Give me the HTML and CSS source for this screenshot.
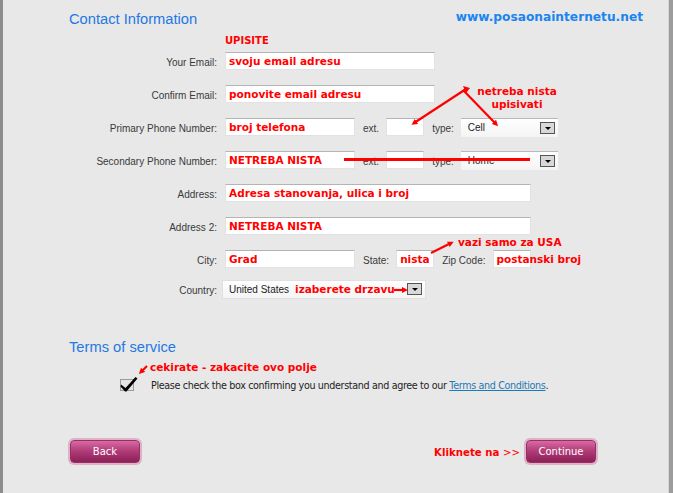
FILE: index.html
```html
<!DOCTYPE html>
<html lang="en">
<head>
    <meta charset="UTF-8">
    <title>Contact Information</title>
    <link rel="stylesheet" href="styles.css">
</head>
<body>
    <div class="page">
        <div class="header">
            <h2>Contact Information</h2>
            <span class="site">www.posaonainternetu.net</span>
        </div>

        <div class="form">
            <div class="row hint"><span></span><span class="red">UPISITE</span></div>

            <div class="row">
                <label>Your Email:</label>
                <div class="cell"><div class="field w210 red">svoju email adresu</div></div>
            </div>
            <div class="row">
                <label>Confirm Email:</label>
                <div class="cell"><div class="field w210 red">ponovite email adresu</div></div>
            </div>
            <div class="row">
                <label>Primary Phone Number:</label>
                <div class="cell">
                    <div class="field w130 red">broj telefona</div>
                    <span class="sub">ext.</span>
                    <div class="field w38"></div>
                    <span class="sub">type:</span>
                    <div class="select w97"><span>Cell</span><i class="drop"></i></div>
                </div>
            </div>
            <div class="row">
                <label>Secondary Phone Number:</label>
                <div class="cell">
                    <div class="field w130 red">NETREBA NISTA</div>
                    <span class="sub">ext.</span>
                    <div class="field w38"></div>
                    <span class="sub">type:</span>
                    <div class="select w97"><span>Home</span><i class="drop"></i></div>
                    <div class="strike"></div>
                </div>
            </div>
            <div class="row">
                <label>Address:</label>
                <div class="cell"><div class="field w306 red">Adresa stanovanja, ulica i broj</div></div>
            </div>
            <div class="row">
                <label>Address 2:</label>
                <div class="cell"><div class="field w306 red">NETREBA NISTA</div></div>
            </div>
            <div class="row">
                <label>City:</label>
                <div class="cell">
                    <div class="field w130 red">Grad</div>
                    <span class="sub">State:</span>
                    <div class="field w38 red">nista</div>
                    <span class="sub">Zip Code:</span>
                    <div class="field w38 red">postanski broj</div>
                </div>
            </div>
            <div class="row country">
                <label>Country:</label>
                <div class="cell">
                    <div class="select w204">
                        <span>United States</span>
                        <span class="red pick">izaberete drzavu</span>
                        <i class="drop"></i>
                    </div>
                </div>
            </div>
        </div>

        <h2 class="terms-title">Terms of service</h2>
        <div class="terms">
            <div class="red check-note">cekirate - zakacite ovo polje</div>
            <div class="agree">
                <svg class="box" width="20" height="16" viewBox="0 0 20 16">
                    <rect x="0.5" y="3.5" width="13" height="11" fill="#e4e4e4" stroke="#9a9a9a"/>
                    <path d="M1 8.5 L5.5 12 L15.5 1 L17.5 2.5 L6.5 15.5 L5 15.5 L0.5 10.5 Z" fill="#000"/>
                </svg>
                <p>Please check the box confirming you understand and agree to our <a href="#">Terms and Conditions</a>.</p>
            </div>
        </div>

        <div class="actions">
            <button class="btn">Back</button>
            <div class="next">
                <span class="red">Kliknete na <span class="thin">&gt;&gt;</span></span>
                <button class="btn">Continue</button>
            </div>
        </div>

        <!-- notes drawn over the form -->
        <div class="note note-phone red">netreba nista<br>upisivati</div>
        <div class="note note-usa red">vazi samo za USA</div>
        <svg class="arrows" width="673" height="493" viewBox="0 0 673 493">
            <defs>
                <marker id="head" markerWidth="6" markerHeight="6" refX="3" refY="3" orient="auto" markerUnits="userSpaceOnUse" viewBox="0 0 6 6">
                    <path d="M0 0 L6 3 L0 6 Z" fill="#f00"/>
                </marker>
            </defs>
            <g stroke="#f00" stroke-width="2.2" fill="none">
                <path d="M466 89 L414 123" marker-end="url(#head)"/>
                <path d="M463 90 L496 124" marker-end="url(#head)"/>
                <path d="M431 253 L451 243" marker-end="url(#head)"/>
                <path d="M394 290 L405 290" marker-end="url(#head)"/>
                <path d="M147 366 L141 372" marker-end="url(#head)"/>
            </g>
            <path d="M463 86 L470 88 L466 93 Z" fill="#f00"/>
        </svg>
    </div>
</body>
</html>
```

FILE: styles.css
```css
body {
    margin: 0;
    background: #e8e8e8;
    font-family: "Liberation Sans", Arial, sans-serif;
    font-size: 10px;
    color: #3a3a3a;
}

.page {
    position: relative;
    box-sizing: border-box;
    width: 673px;
    height: 493px;
    border-left: 3px solid #8c8c8c;
    border-right: 4px solid #9c9c9c;
    box-shadow: inset -1px 0 #d6d6d6;
    padding: 10px 0 0 66px;
    overflow: hidden;
}

.red {
    color: #f00;
    font-family: "DejaVu Sans", Verdana, sans-serif;
    font-weight: bold;
    font-size: 10.5px;
}

.header {
    display: flex;
    justify-content: space-between;
    padding-right: 26px;
}

h2 {
    margin: 0;
    font-size: 14.7px;
    line-height: 18px;
    font-weight: normal;
    color: #1e78e6;
}

.site {
    font-family: "DejaVu Sans", Verdana, sans-serif;
    font-weight: bold;
    font-size: 12.2px;
    color: #1a84f0;
}

.form {
    margin-top: 6px;
}

.row {
    display: grid;
    grid-template-columns: 148px auto;
    column-gap: 8px;
    height: 18px;
    margin-bottom: 15px;
    align-items: center;
}

.row.hint {
    height: 13px;
    margin-bottom: 5px;
}

.row.hint .red {
    font-size: 10px;
}

.row.country {
    margin-top: -3px;
}

label {
    text-align: right;
    padding-top: 3px;
}

.cell {
    position: relative;
    display: flex;
    align-items: center;
    height: 18px;
}

.field {
    box-sizing: border-box;
    height: 18px;
    line-height: 16px;
    background: #fff;
    border: 1px solid #e2e2e2;
    border-top-color: #b4b4b4;
    padding-left: 3px;
    white-space: nowrap;
}

.w210 { width: 210px; }
.w130 { width: 130px; }
.w38 { width: 38px; }
.w306 { width: 306px; }
.w97 { width: 97px; }
.w204 { width: 204px; }

.sub {
    margin: 3px 7px 0 8px;
}

.select {
    box-sizing: border-box;
    display: flex;
    align-items: center;
    height: 19px;
    background: linear-gradient(#fff, #f4f4f4);
    border-top: 1px solid #b8b8b8;
    padding: 0 3px 0 7px;
    color: #222;
}

.row .select.w204 {
    margin-left: -3px;
    padding-left: 6px;
    border: 1px solid #e0e0e0;
}

.select .drop {
    margin-left: auto;
    width: 13px;
    height: 10px;
    border: 1px solid #555;
    background: #d8d8d8;
    position: relative;
}

.select .drop::after {
    content: "";
    position: absolute;
    left: 4px;
    top: 4px;
    border-left: 3px solid transparent;
    border-right: 3px solid transparent;
    border-top: 3px solid #000;
}

.pick {
    margin-left: 6px;
}

.strike {
    position: absolute;
    left: 119px;
    top: 7px;
    width: 186px;
    height: 3px;
    background: #f00;
}

.terms-title {
    margin-top: 40px;
}

.terms {
    margin-left: 51px;
}

.check-note {
    margin: 4px 0 0 30px;
    line-height: 14px;
}

.agree {
    display: flex;
    align-items: center;
    margin-top: 2px;
}

.agree p {
    margin: 0 0 0 11px;
    padding-top: 3px;
    font-family: "DejaVu Sans", Tahoma, sans-serif;
    font-size: 9.6px;
    letter-spacing: -0.35px;
    color: #222;
}

.agree a {
    color: #1d79b4;
}

.actions {
    display: flex;
    justify-content: space-between;
    align-items: center;
    width: 526px;
    margin-top: 48px;
    margin-left: 1px;
}

.next {
    display: flex;
    align-items: center;
    gap: 6px;
}

.next .red {
    padding-top: 1px;
    font-size: 10.2px;
}

.thin {
    font-weight: normal;
    font-family: "DejaVu Sans", sans-serif;
}

.btn {
    width: 70px;
    height: 23px;
    border: 1px solid #9c2e66;
    border-radius: 4px;
    background: linear-gradient(#d86aa4, #b23e7a 45%, #8d1f57);
    box-shadow: 0 0 0 2px #dcb3c6;
    color: #fff;
    font-family: "DejaVu Sans", Tahoma, sans-serif;
    font-size: 10px;
    padding: 0;
}

.note {
    position: absolute;
    line-height: 13px;
}

.note-phone {
    left: 472px;
    top: 85px;
    width: 84px;
    text-align: center;
}

.note-usa {
    left: 455px;
    top: 236px;
}

.arrows {
    position: absolute;
    left: -3px;
    top: 0;
    pointer-events: none;
}
```
